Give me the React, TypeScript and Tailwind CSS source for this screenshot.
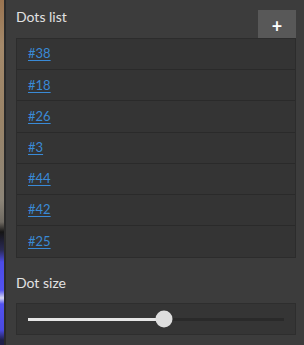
const DOTS = ['#38', '#18', '#26', '#3', '#44', '#42', '#25']

export default function App() {
  const pct = 0.53

  return (
    <div className="flex h-[345px] w-[304px] overflow-hidden bg-[#3c3c3c] font-['Lato',sans-serif]">
      {/* backdrop peeking through on the left */}
      <div className="w-[4px] flex-shrink-0 bg-[linear-gradient(to_bottom,#9a7450_0px,#a4896a_45px,#9a8468_120px,#8c8578_200px,#6f6a62_222px,#151515_232px,#2a2a55_250px,#4c4ce6_262px,#5252f0_290px,#d8d8f0_298px,#5252f0_304px,#4a4ae0_330px,#20204a_340px)]" />
      <div className="w-[2px] flex-shrink-0 bg-[#2a2a2a]" />

      <div className="flex flex-1 flex-col pl-[10px] pr-[8px]">
        <div className="flex h-[38px] items-end justify-between">
          <span className="mb-[11px] text-[14px] text-[#e2e2e2]">Dots list</span>
          <button className="flex h-[28px] w-[38px] items-center justify-center bg-[#585858] pt-[3px] text-[18px] font-bold leading-none text-white">
            +
          </button>
        </div>

        <div className="flex flex-col border border-[#2c2c2c] bg-[#343434]">
          {DOTS.map((d, i) => (
            <div
              key={i}
              className="flex h-[31.2px] items-center border-b border-[#2a2a2a] px-[11px] last:border-0"
            >
              <a href="#" className="text-[13px] text-[#3a8ad6] underline underline-offset-2">
                {d}
              </a>
            </div>
          ))}
        </div>

        <div className="mt-[14px] text-[14px] text-[#e2e2e2]">Dot size</div>

        <div className="mt-[10px] flex h-[32px] items-center border border-[#2e2e2e] bg-[#353535] px-[11px]">
          <div className="relative h-[3px] flex-1 bg-[#2a2a2a]">
            <div className="absolute left-0 top-0 h-full bg-[#e6e6e6]" style={{ width: `${pct * 100}%` }} />
            <div
              className="absolute top-1/2 h-[17px] w-[17px] -translate-x-1/2 -translate-y-1/2 rounded-full bg-[#dedede]"
              style={{ left: `${pct * 100}%` }}
            />
          </div>
        </div>
      </div>
    </div>
  )
}
